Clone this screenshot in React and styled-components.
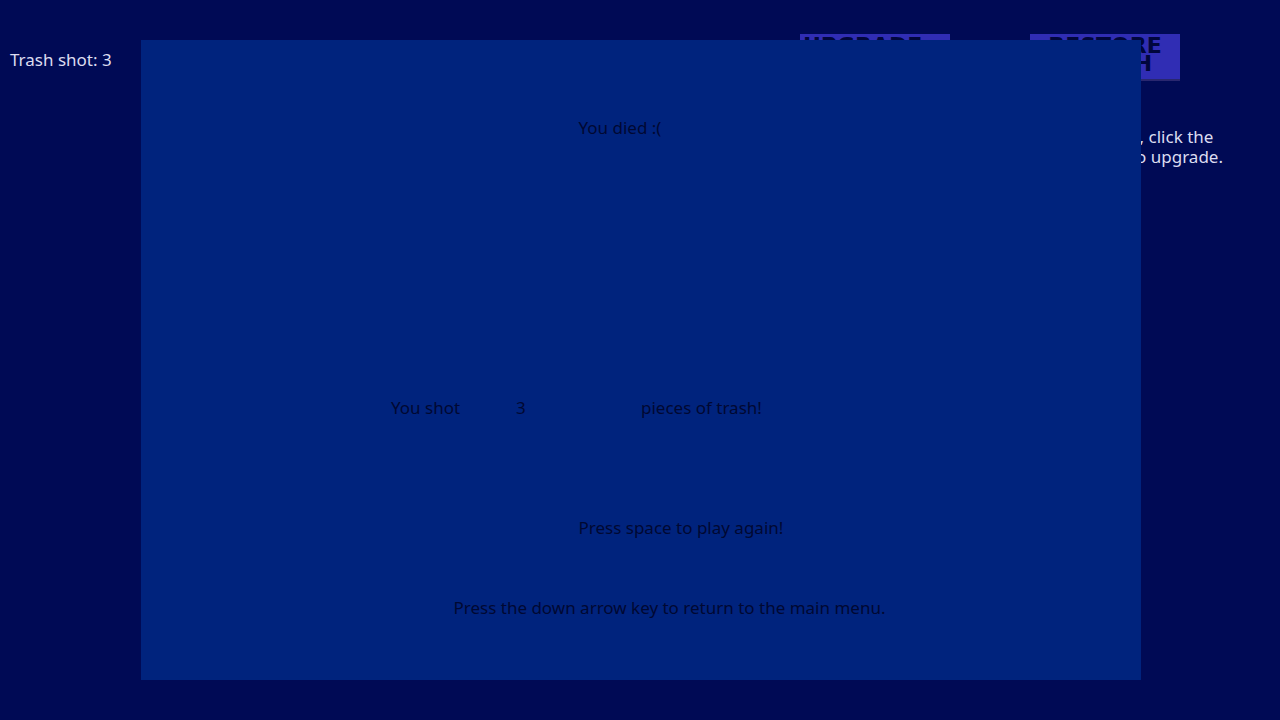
import styled, { createGlobalStyle } from "styled-components";

export default function App() {
    const trashShot = 3;

    return (
        <>
            <GlobalStyle />
            <Game>
                <Hud>
                    <Score>Trash shot: {trashShot}</Score>
                    <Shop>
                        <ShopItem>
                            <ShopButton type="button" $align="left">UPGRADE</ShopButton>
                        </ShopItem>
                        <ShopItem>
                            <ShopButton type="button" $align="center">
                                RESTORE
                                <br />
                                HEALTH
                            </ShopButton>
                        </ShopItem>
                    </Shop>
                </Hud>
                <Hint>
                    , click the
                    <br />
                    to upgrade.
                </Hint>
                <GameOver role="dialog" aria-label="Game over">
                    <Message $row={3} $col={8}>You died :(</Message>
                    <Message $row={10} $col={5}>You shot</Message>
                    <Message $row={10} $col={7}>{trashShot}</Message>
                    <Message $row={10} $col={9}>pieces of trash!</Message>
                    <Message $row={13} $col={8}>Press space to play again!</Message>
                    <Message $row={15} $col={6}>
                        Press the down arrow key to return to the main menu.
                    </Message>
                </GameOver>
            </Game>
        </>
    );
}

const GlobalStyle = createGlobalStyle`
  body {
    margin: 0;
    background-color: #000a55;
  }
`;

const Game = styled.main`
  position: relative;
  box-sizing: border-box;
  min-height: 100vh;
  padding: 34px 0 0 10px;
  overflow: hidden;
  background-color: #000a55;
  color: #dcdcf0;
  font-family: "Noto Sans", sans-serif;
  font-size: 17px;
  line-height: 20px;
`;

const Hud = styled.header`
  display: flex;
  justify-content: space-between;
  padding-right: 100px;
`;

const Score = styled.div`
  padding-top: 16px;
`;

const Shop = styled.div`
  display: flex;
  gap: 80px;
`;

const ShopItem = styled.div`
  width: 150px;
`;

const ShopButton = styled.button`
  display: flex;
  align-items: flex-start;
  justify-content: ${(props) => props.$align};
  width: 100%;
  min-height: 47px;
  padding: 3px 3px 0;
  border: 0;
  border-bottom: 2px solid #29276f;
  background-color: #302db4;
  color: #00063c;
  font-family: "DejaVu Sans", sans-serif;
  font-size: 22px;
  font-weight: bold;
  line-height: 18px;
  text-align: ${(props) => props.$align};
  cursor: pointer;
`;

const Hint = styled.p`
  width: fit-content;
  margin: 46px 57px 0 auto;
  text-align: center;
`;

// covers the playing field once the ship is destroyed
const GameOver = styled.section`
  position: absolute;
  inset: 40px 139px 40px 141px;
  display: grid;
  grid-template-columns: repeat(16, 1fr);
  grid-template-rows: repeat(16, 1fr);
  background-color: #00237d;
  color: #000832;
  line-height: 16px;
`;

const Message = styled.p`
  grid-row: ${(props) => props.$row};
  grid-column: ${(props) => props.$col} / -1;
  margin: 0;
  white-space: nowrap;
`;
